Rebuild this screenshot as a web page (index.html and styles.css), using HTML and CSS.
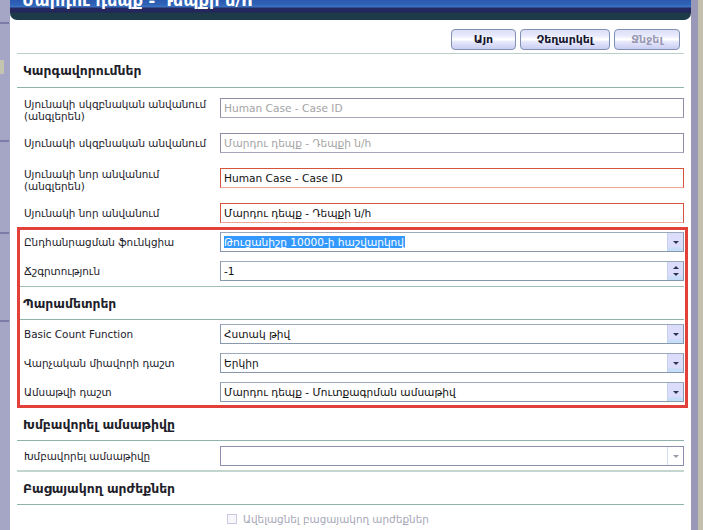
FILE: index.html
```html
<!DOCTYPE html>
<html lang="hy">
<head>
<meta charset="utf-8">
<title>Մարդու դեպք - Դեպքի ն/h</title>
<link rel="stylesheet" href="styles.css">
</head>
<body>
<div class="screen">
  <div class="backdrop-left">
    <span class="bit b1"></span><span class="bit b2"></span><span class="bit b3"></span><span class="bit b4"></span><span class="bit b5"></span>
  </div>
  <div class="dialog">
    <div class="titlebar"><span class="title">Մարդու դեպք - Դեպքի ն/h</span></div>
    <div class="body">
      <div class="toolbar">
        <button class="btn btn-ok">Այո</button>
        <button class="btn btn-cancel">Չեղարկել</button>
        <button class="btn btn-del" disabled>Ջնջել</button>
      </div>

      <div class="section-head section-first">Կարգավորումներ</div>
      <div class="group">
        <div class="row row-tall">
          <div class="label">Սյունակի սկզբնական անվանում<br>(անգլերեն)</div>
          <div class="field field-disabled">Human Case - Case ID</div>
        </div>
        <div class="row row-tall">
          <div class="label">Սյունակի սկզբնական անվանում</div>
          <div class="field field-disabled">Մարդու դեպք - Դեպքի ն/h</div>
        </div>
        <div class="row row-tall">
          <div class="label">Սյունակի նոր անվանում<br>(անգլերեն)</div>
          <div class="field field-required">Human Case - Case ID</div>
        </div>
        <div class="row row-tall">
          <div class="label">Սյունակի նոր անվանում</div>
          <div class="field field-required">Մարդու դեպք - Դեպքի ն/h</div>
        </div>
        <div class="row">
          <div class="label">Ընդհանրացման ֆունկցիա</div>
          <div class="field field-select"><span class="value"><span class="selected">Թուցանիշը 10000-ի հաշվարկով</span></span><span class="arrow"><span class="tri-down"></span></span></div>
        </div>
        <div class="row">
          <div class="label">Ճշգրտություն</div>
          <div class="field field-spin"><span class="value">-1</span><span class="arrow spin"><span class="tri-up"></span><span class="tri-down"></span></span></div>
        </div>
      </div>

      <div class="section-head">Պարամետրեր</div>
      <div class="group">
        <div class="row">
          <div class="label">Basic Count Function</div>
          <div class="field field-select"><span class="value">Հստակ թիվ</span><span class="arrow"><span class="tri-down"></span></span></div>
        </div>
        <div class="row">
          <div class="label">Վարչական միավորի դաշտ</div>
          <div class="field field-select"><span class="value">Երկիր</span><span class="arrow"><span class="tri-down"></span></span></div>
        </div>
        <div class="row">
          <div class="label">Ամսաթվի դաշտ</div>
          <div class="field field-select"><span class="value">Մարդու դեպք - Մուտքագրման ամսաթիվ</span><span class="arrow"><span class="tri-down"></span></span></div>
        </div>
      </div>

      <div class="section-head">Խմբավորել ամսաթիվը</div>
      <div class="group group-double">
        <div class="row row-group">
          <div class="label">Խմբավորել ամսաթիվը</div>
          <div class="field field-empty"><span class="value"></span><span class="arrow arrow-light"><span class="tri-down"></span></span></div>
        </div>
      </div>

      <div class="section-head">Բացայակող արժեքներ</div>
      <div class="check-row">
        <span class="checkbox"></span>
        <span class="check-label">Ավելացնել բացայակող արժեքներ</span>
      </div>

      <div class="highlight"></div>
    </div>
  </div>
  <div class="backdrop-right"><span class="tan"></span></div>
</div>
</body>
</html>
```
FILE: styles.css
```css
* { box-sizing: border-box; }
html, body { margin: 0; padding: 0; }
body {
  width: 703px;
  height: 530px;
  overflow: hidden;
  font-family: "DejaVu Sans", Verdana, sans-serif;
  font-size: 10.4px;
  color: #1b1b2b;
  background: #a3a3c3;
}
.screen {
  display: flex;
  width: 703px;
  height: 530px;
}
.backdrop-left {
  position: relative;
  width: 10px;
  flex: none;
  background: #a5a5c6;
}
.bit { position: absolute; left: 0; width: 9px; height: 2px; background: #7c7ca6; }
.b1 { top: 22px; }
.b2 { top: 60px; background: #c4c4b0; height: 14px; width: 4px; }
.b3 { top: 140px; }
.b4 { top: 232px; }
.b5 { top: 320px; }

.dialog {
  width: 681px;
  flex: none;
  background: #ffffff;
  display: flex;
  flex-direction: column;
}
.titlebar {
  height: 20px;
  flex: none;
  overflow: hidden;
  border-radius: 0 0 7px 7px;
  background: linear-gradient(to bottom,
    #2a5ab0 0px, #2f64b8 5px, #3a70c0 6px, #3a70c0 7px,
    #262a62 8px, #23245a 12px,
    #1d3a48 13px, #1d3a48 20px);
  padding-left: 12px;
}
.title {
  display: block;
  margin-top: -9px;
  color: #ffffff;
  font-size: 16.2px;
  font-weight: bold;
  line-height: 20px;
  white-space: nowrap;
}
.body {
  position: relative;
  flex: 1;
  padding: 0 7px;
}
.toolbar {
  display: flex;
  justify-content: flex-end;
  gap: 4px;
  padding: 9px 4px 3px 0;
  border-bottom: 1px solid #b9cfc7;
}
.btn {
  height: 21px;
  padding: 0;
  border: 1px solid #8090b4;
  border-radius: 4px;
  font-family: "DejaVu Sans", Verdana, sans-serif;
  font-size: 11px;
  font-weight: bold;
  color: #161630;
  background: linear-gradient(to bottom,
    #dcdff8 0%, #e8eafc 30%, #ffffff 50%, #e6e8fb 62%, #c9cdf1 100%);
}
.btn-ok { width: 65px; }
.btn-cancel { width: 90px; }
.btn-del { width: 66px; color: #9a9ab4; }

.section-head {
  height: 33px;
  padding-left: 6px;
  display: flex;
  align-items: center;
  font-weight: bold;
  font-size: 12.4px;
  color: #1e1e2a;
  border-bottom: 1px solid #8fb5aa;
}
.section-first { height: 34px; }
.group { border-bottom: 1px solid #9ebfb4; }
.group-double { border-bottom: 2px solid #c2d6cf; }

.row {
  display: flex;
  align-items: flex-start;
  height: 29px;
  padding-top: 4px;
}
.row-tall { height: 35px; padding-top: 10px; }
.row-group { height: 29px; padding-top: 5px; }
.label {
  width: 203px;
  flex: none;
  padding-left: 7px;
  min-height: 20px;
  display: flex;
  align-items: center;
  line-height: 12px;
}

.field {
  width: 464px;
  height: 20px;
  flex: none;
  display: flex;
  align-items: center;
  padding-left: 3px;
  border: 1px solid #9494ae;
  background: #ffffff;
  white-space: nowrap;
  overflow: hidden;
  color: #111;
  font-size: 10.6px;
}
.field-disabled {
  color: #a4a4a4;
  border-color: #8e8ea8;
  border-bottom-color: #a8a8bc;
}
.field-required {
  border-color: #d4553b;
  border-bottom-color: #f0a594;
}
.field-select, .field-spin {
  border-color: #8898ad;
  border-top-color: #9aa9bb;
  padding-right: 0;
}
.field-empty { border-color: #8c8cac; }
.value { flex: 1; overflow: hidden; }
.selected {
  background: #3399ff;
  color: #ffffff;
  padding: 1px 1px 1px 0;
}
.arrow {
  width: 16px;
  height: 18px;
  flex: none;
  display: flex;
  flex-direction: column;
  align-items: center;
  justify-content: center;
  gap: 3px;
  border-left: 1px solid #c8d0ee;
  background: linear-gradient(to bottom, #dcdcfb 0%, #dcdcfb 78%, #c6def8 82%, #c6def8 100%);
}
.arrow-light {
  background: #ffffff;
  border-left-color: #cfe0f5;
}
.arrow-light .tri-down { border-top-color: #9a9aa8; }
.tri-down {
  width: 0; height: 0;
  border-left: 3px solid transparent;
  border-right: 3px solid transparent;
  border-top: 3px solid #2a3555;
}
.tri-up {
  width: 0; height: 0;
  border-left: 3px solid transparent;
  border-right: 3px solid transparent;
  border-bottom: 3px solid #2a3555;
}
.spin { gap: 4px; }

.check-row {
  display: flex;
  align-items: center;
  gap: 6px;
  padding: 8px 0 0 210px;
}
.checkbox {
  width: 10px;
  height: 10px;
  border: 1px solid #c9c9e2;
  background: #f6f6fb;
}
.check-label { color: #a6a6b8; }

.highlight {
  position: absolute;
  left: 7px;
  top: 207px;
  width: 671px;
  height: 181px;
  border: 3px solid #e2403b;
  pointer-events: none;
}

.backdrop-right {
  flex: 1;
  display: flex;
  justify-content: flex-end;
  background: #9a98b8;
}
.tan { width: 5px; background: #c2bfac; }
```
